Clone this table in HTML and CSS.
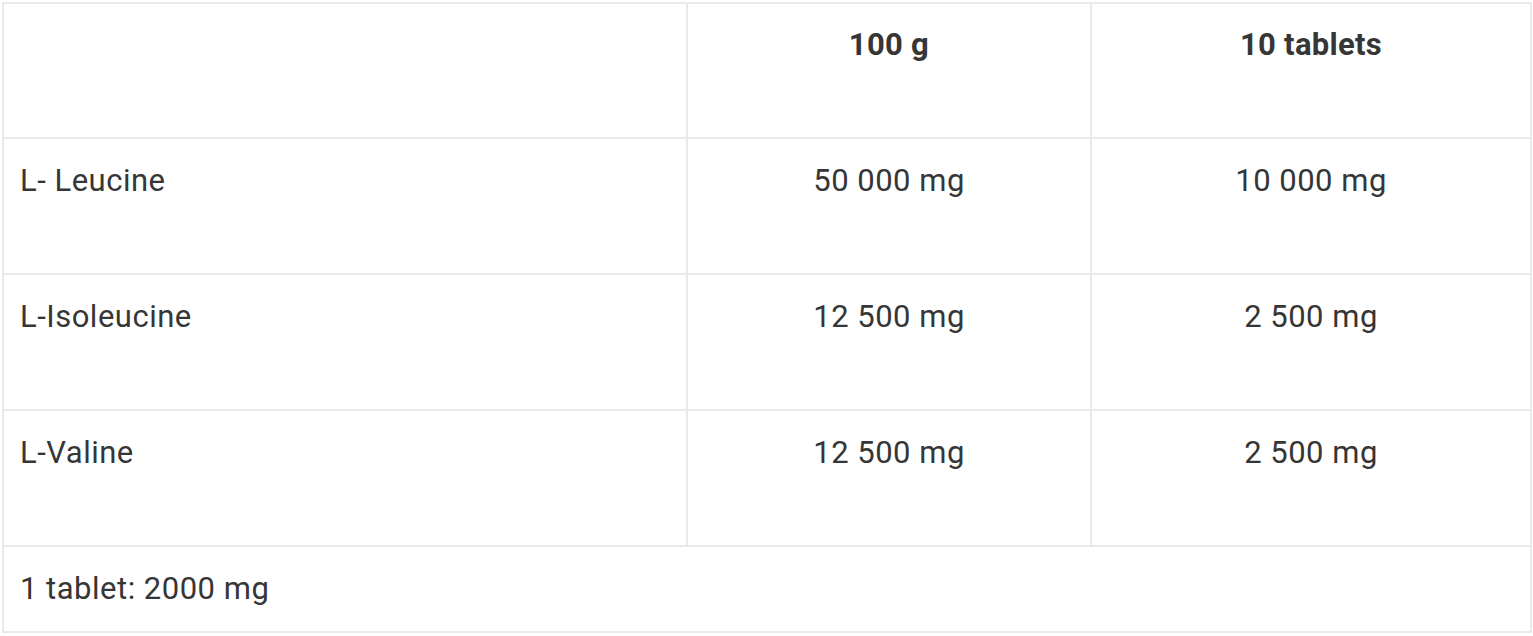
FILE: index.html
```html
<!DOCTYPE html>
<html>
<head>
<meta charset="utf-8">
<link rel="stylesheet" href="styles.css">
</head>
<body>
<table class="nutri">
  <colgroup>
    <col class="c1">
    <col class="c2">
    <col class="c3">
  </colgroup>
  <thead>
    <tr class="head-row">
      <th class="name"></th>
      <th>100 g</th>
      <th>10 tablets</th>
    </tr>
  </thead>
  <tbody>
    <tr class="row">
      <td class="name">L- Leucine</td>
      <td>50 000 mg</td>
      <td>10 000 mg</td>
    </tr>
    <tr class="row">
      <td class="name">L-Isoleucine</td>
      <td>12 500 mg</td>
      <td>2 500 mg</td>
    </tr>
    <tr class="row">
      <td class="name">L-Valine</td>
      <td>12 500 mg</td>
      <td>2 500 mg</td>
    </tr>
    <tr class="foot-row">
      <td class="name" colspan="3">1 tablet: 2000 mg</td>
    </tr>
  </tbody>
</table>
</body>
</html>
```
FILE: styles.css
```css
html, body {
  margin: 0;
  padding: 0;
  background: #ffffff;
}

body {
  padding: 2px;
  font-family: Roboto, "Noto Sans", sans-serif;
  color: #363636;
}

.nutri {
  border-collapse: collapse;
  table-layout: fixed;
  width: 1528px;
}

.c1 { width: 684px; }
.c2 { width: 404px; }
.c3 { width: 440px; }

.nutri th,
.nutri td {
  border: 2px solid #e9e9e9;
  font-size: 31px;
  line-height: 45px;
  text-align: center;
  vertical-align: top;
  padding: 19px 16px 70px;
}

.nutri th {
  font-weight: 700;
  letter-spacing: 0.3px;
  padding-top: 18px;
}

.nutri td {
  font-weight: 400;
  letter-spacing: 0.5px;
}

.nutri .name {
  text-align: left;
}

.foot-row td {
  padding-bottom: 20px;
}
```
